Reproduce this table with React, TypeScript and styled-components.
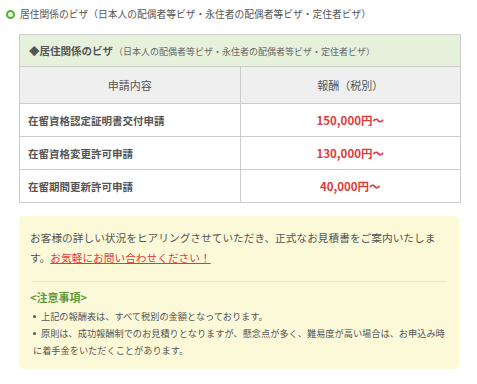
import React from "react";
import styled, { createGlobalStyle } from "styled-components";

const Global = createGlobalStyle`
  html, body { margin: 0; padding: 0; background: #fff; }
  body {
    font-family: "Noto Sans CJK JP", "Noto Sans", sans-serif;
    color: #555;
  }
`;

const Page = styled.div`
  width: 477px;
  padding: 6px 0 0 0;
  box-sizing: border-box;
`;

const Heading = styled.h3`
  display: flex;
  align-items: center;
  gap: 5px;
  margin: 0 0 0 6px;
  font-size: 9.75px;
  font-weight: 400;
  line-height: 16px;
  color: #555;
`;

const Dot = styled.span`
  width: 5px;
  height: 5px;
  border-radius: 50%;
  border: 2.5px solid #58b03a;
  background: #e8f4df;
  flex: none;
`;

const Body = styled.div`
  padding: 12px 16px 0 19px;
  display: flex;
  flex-direction: column;
  gap: 13px;
`;

const Table = styled.table`
  width: 442px;
  border-collapse: collapse;
  border: 1px solid #ccc;
  font-size: 11px;
`;

const Caption = styled.th`
  background: #e6f1dc;
  text-align: left;
  padding: 0 9px;
  height: 31px;
  border: 1px solid #ccc;
  font-weight: 700;
  font-size: 10.5px;
  color: #555;
  white-space: nowrap;
`;

const CaptionSub = styled.span`
  font-weight: 400;
  font-size: 9px;
  color: #666;
  margin-left: 1px;
`;

const HeadCell = styled.th`
  background: #efefef;
  height: 34px;
  font-weight: 400;
  font-size: 11px;
  text-align: center;
  border: 1px solid #ccc;
  color: #555;
  width: 50%;
`;

const Cell = styled.td<{ $price?: boolean }>`
  height: 32px;
  border: 1px solid #ccc;
  padding: 0 ${(p) => (p.$price ? "0" : "8px")};
  text-align: ${(p) => (p.$price ? "center" : "left")};
  color: ${(p) => (p.$price ? "#e0393b" : "#555")};
  font-weight: 700;
  font-size: ${(p) => (p.$price ? "11.5px" : "10.5px")};
`;

const Notice = styled.div`
  width: 440px;
  box-sizing: border-box;
  background: #fcf9d9;
  border-radius: 5px;
  padding: 12px 12px 10px 11px;
`;

const Lead = styled.p`
  margin: 0 8px 0 0;
  padding-bottom: 14px;
  font-size: 10.7px;
  line-height: 19.5px;
  color: #555;
`;

const Link = styled.a`
  color: #e0393b;
  text-decoration: underline;
`;

const Notes = styled.div`
  border-top: 1px solid #ece7c3;
  margin-left: 2px;
  padding-top: 6px;
`;

const NoteTitle = styled.div`
  font-size: 11px;
  font-weight: 700;
  color: #5e9a3b;
  line-height: 18px;
  margin-left: -2px;
`;

const NoteList = styled.ul`
  margin: 2px 0 0 -2px;
  padding: 0;
  list-style: none;
  font-size: 9.2px;
  line-height: 17px;
  color: #555;
`;

const NoteItem = styled.li`
  padding-left: 3px;
  &::before {
    content: "";
    display: inline-block;
    vertical-align: middle;
    width: 3px;
    height: 3px;
    margin: 0 5px 2px 0;
    border-radius: 50%;
    background: #555;
  }
`;

const rows = [
  { name: "在留資格認定証明書交付申請", price: "150,000円～" },
  { name: "在留資格変更許可申請", price: "130,000円～" },
  { name: "在留期間更新許可申請", price: "40,000円～" },
];

export default function App() {
  return (
    <Page>
      <Global />
      <Heading>
        <Dot />
        居住関係のビザ（日本人の配偶者等ビザ・永住者の配偶者等ビザ・定住者ビザ）
      </Heading>
      <Body>
        <Table>
          <thead>
            <tr>
              <Caption colSpan={2}>
                ◆居住関係のビザ
                <CaptionSub>（日本人の配偶者等ビザ・永住者の配偶者等ビザ・定住者ビザ）</CaptionSub>
              </Caption>
            </tr>
            <tr>
              <HeadCell>申請内容</HeadCell>
              <HeadCell>報酬（税別）</HeadCell>
            </tr>
          </thead>
          <tbody>
            {rows.map((r) => (
              <tr key={r.name}>
                <Cell>{r.name}</Cell>
                <Cell $price>{r.price}</Cell>
              </tr>
            ))}
          </tbody>
        </Table>
        <Notice>
          <Lead>
            お客様の詳しい状況をヒアリングさせていただき、正式なお見積書をご案内いたします。
            <Link href="#">お気軽にお問い合わせください！</Link>
          </Lead>
          <Notes>
            <NoteTitle>&lt;注意事項&gt;</NoteTitle>
            <NoteList>
              <NoteItem>上記の報酬表は、すべて税別の金額となっております。</NoteItem>
              <NoteItem>
                原則は、成功報酬制でのお見積りとなりますが、懸念点が多く、難易度が高い場合は、お申込み時に着手金をいただくことがあります。
              </NoteItem>
            </NoteList>
          </Notes>
        </Notice>
      </Body>
    </Page>
  );
}
